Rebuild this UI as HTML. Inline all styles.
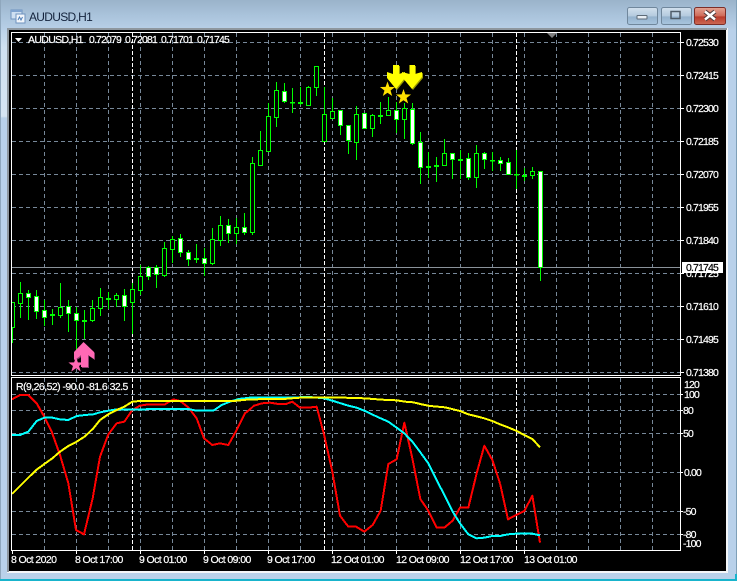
<!DOCTYPE html>
<html><head><meta charset="utf-8"><title>AUDUSD,H1</title>
<style>
html,body{margin:0;padding:0;width:737px;height:581px;overflow:hidden;background:#b9d1ea}
svg{display:block}
text{font-family:"Liberation Sans",sans-serif;font-size:10.5px;fill:#fff;stroke:#fff;stroke-width:.2px;letter-spacing:-.85px}
.d{letter-spacing:-.6px}
.c{shape-rendering:crispEdges}
.l polyline{shape-rendering:crispEdges}
</style></head><body>
<svg width="737" height="581" viewBox="0 0 737 581" xmlns="http://www.w3.org/2000/svg">
<defs>
<linearGradient id="top" x1="0" y1="0" x2="0" y2="1"><stop offset="0" stop-color="#9ab3ca"/><stop offset=".5" stop-color="#a9c3db"/><stop offset="1" stop-color="#b8d0e8"/></linearGradient>
<linearGradient id="glow" x1="0" y1="0" x2="0" y2="1"><stop offset="0" stop-color="#bcd3ea"/><stop offset=".2" stop-color="#cfe1f2"/><stop offset=".98" stop-color="#d6e5f3"/><stop offset="1" stop-color="#b9d1ea"/></linearGradient>
<linearGradient id="btn" x1="0" y1="0" x2="0" y2="1"><stop offset="0" stop-color="#d3e1ee"/><stop offset=".5" stop-color="#b4cade"/><stop offset=".55" stop-color="#95b2cd"/><stop offset="1" stop-color="#a9c6df"/></linearGradient>
<linearGradient id="red" x1="0" y1="0" x2="0" y2="1"><stop offset="0" stop-color="#e4a594"/><stop offset=".5" stop-color="#cf6a58"/><stop offset=".55" stop-color="#b93a2a"/><stop offset="1" stop-color="#cc6a55"/></linearGradient>
<clipPath id="mc"><rect x="12" y="33" width="668" height="342"/></clipPath>
</defs>

<!-- window frame -->
<rect width="737" height="581" fill="#b9d1ea"/>
<rect width="737" height="30" fill="url(#top)"/>
<rect x="1" y="30" width="6" height="88" fill="url(#glow)"/>
<rect x="0" y="0" width="1" height="581" fill="#8fa7bd"/>
<rect x="736" y="0" width="1" height="581" fill="#7fa0b8"/>
<rect x="0" y="579" width="737" height="2" fill="#19b4cc"/>
<rect x="735" y="574" width="2" height="7" fill="#19b4cc"/>
<rect x="7" y="28" width="721" height="545" fill="#f4f6f8"/>
<rect x="7" y="28" width="720" height="2" fill="#8e979f"/>
<rect x="7" y="28" width="2" height="544" fill="#8e979f"/>
<rect x="9" y="30" width="717" height="541" fill="#000"/>

<!-- title icon -->
<g class="c">
<rect x="11" y="10" width="11" height="9" fill="#cfe0f2" stroke="#6f93bf"/>
<rect x="11" y="10" width="11" height="2" fill="#7fa3cf"/>
<rect x="16" y="14" width="9" height="9" fill="#f2f6fb" stroke="#6f93bf"/>
</g>
<path d="M18 20l1.500-3 1.500 3 1.500-3" fill="none" stroke="#4f7fb8"/>
<text x="29" y="21" style="font-size:12px;letter-spacing:-.7px;fill:#14233c;stroke:none">AUDUSD,H1</text>

<!-- caption buttons -->
<rect x="627.500" y="7.500" width="30" height="17" rx="2" fill="url(#btn)" stroke="#70879c"/>
<rect x="637" y="15.500" width="10" height="3.500" rx=".5" fill="#e8eef4" stroke="#5d6b78"/>
<rect x="661.500" y="7.500" width="30" height="17" rx="2" fill="url(#btn)" stroke="#70879c"/>
<rect x="671" y="11.500" width="9" height="7" fill="none" stroke="#4f5c68" stroke-width="1.500"/>
<rect x="694.500" y="7.500" width="31" height="17" rx="2" fill="url(#red)" stroke="#7c2e28"/>
<path d="M705 11.500l10 8M715 11.500l-10 8" stroke="#4a3a3a" stroke-width="4.500"/>
<path d="M705 11.500l10 8M715 11.500l-10 8" stroke="#fff" stroke-width="2.500"/>

<!-- grid -->
<g class="c" fill="none" stroke-width="1">
<path stroke="#778899" stroke-dasharray="4 3" d="M12 42.500H680M12 75.500H680M12 108.500H680M12 141.500H680M12 174.500H680M12 207.500H680M12 240.500H680M12 273.500H680M12 306.500H680M12 339.500H680M12 372.500H680M12 394.500H680M12 410.500H680M12 433.500H680M12 472.500H680M12 511.500H680M12 534.500H680"/>
<path stroke="#778899" stroke-dasharray="4 3" d="M44.500 33V375M76.500 33V375M108.500 33V375M140.500 33V375M172.500 33V375M204.500 33V375M236.500 33V375M268.500 33V375M300.500 33V375M332.500 33V375M364.500 33V375M396.500 33V375M428.500 33V375M460.500 33V375M492.500 33V375M524.500 33V375M556.500 33V375M588.500 33V375M620.500 33V375M652.500 33V375"/>
<path stroke="#778899" stroke-dasharray="4 3" d="M44.500 378V550M76.500 378V550M108.500 378V550M140.500 378V550M172.500 378V550M204.500 378V550M236.500 378V550M268.500 378V550M300.500 378V550M332.500 378V550M364.500 378V550M396.500 378V550M428.500 378V550M460.500 378V550M492.500 378V550M524.500 378V550M556.500 378V550M588.500 378V550M620.500 378V550M652.500 378V550"/>
<path stroke="#fff" stroke-dasharray="4 2" d="M132.500 33V375M324.500 33V375M516.500 33V375M132.500 378V550M324.500 378V550M516.500 378V550"/>
<path stroke="#8a929a" d="M12 267.500H680"/>
</g>

<!-- candles -->
<g class="c" clip-path="url(#mc)" stroke="#00ff00" stroke-width="1">
<path fill="none" d="M12.500 327V343M20.500 282V318M28.500 290V320M36.500 290V319M44.500 300V326M52.500 309V325M60.500 283V318M68.500 300V332M76.500 307V350M84.500 310V339M92.500 300V322M100.500 288V316M108.500 292V309M116.500 293V307M124.500 289V321M132.500 283V334M140.500 265V295M148.500 266V280M156.500 265V288M164.500 242V277M172.500 236V263M180.500 234V257M188.500 250V266M196.500 244V263M204.500 248V276M212.500 228V265M220.500 216V246M228.500 219V243M236.500 218V244M244.500 213V235M252.500 157V235M260.500 131V165M268.500 103V151M276.500 82V127M284.500 83V103M292.500 88V113M300.500 87V105M308.500 86V105M316.500 66V96M324.500 87V141M332.500 98V119M340.500 110V135M348.500 125V154M356.500 106V160M364.500 113V128M372.500 114V137M380.500 102V124M388.500 97V116M396.500 102V133M404.500 103V139M412.500 103V145M420.500 132V184M428.500 152V178M436.500 157V182M444.500 139V165M452.500 153V179M460.500 150V179M468.500 153V180M476.500 145V188M484.500 152V169M492.500 152V171M500.500 157V171M508.500 158V174M516.500 150V189M524.500 168V181M532.500 167V179M540.500 171V281"/>
<path fill="#000" d="M10.500 302.500h4V327.500h-4zM18.500 293.500h4V303.500h-4zM58.500 307.500h4V315.500h-4zM90.500 308.500h4V320.500h-4zM98.500 297.500h4V308.500h-4zM114.500 295.500h4V299.500h-4zM130.500 289.500h4V302.500h-4zM138.500 276.500h4V290.500h-4zM162.500 248.500h4V275.500h-4zM170.500 239.500h4V249.500h-4zM210.500 239.500h4V263.500h-4zM218.500 225.500h4V240.500h-4zM234.500 227.500h4V233.500h-4zM250.500 163.500h4V232.500h-4zM258.500 150.500h4V165.500h-4zM266.500 116.500h4V151.500h-4zM274.500 90.500h4V117.500h-4zM306.500 87.500h4V105.500h-4zM314.500 66.500h4V87.500h-4zM322.500 114.500h4V141.500h-4zM330.500 111.500h4V118.500h-4zM354.500 114.500h4V142.500h-4zM370.500 115.500h4V128.500h-4zM386.500 110.500h4V115.500h-4zM402.500 108.500h4V119.500h-4zM442.500 153.500h4V165.500h-4zM474.500 153.500h4V177.500h-4zM530.500 171.500h4V175.500h-4z"/>
<path fill="#fff" d="M26.500 293.500h4V297.500h-4zM34.500 296.500h4V311.500h-4zM42.500 310.500h4V317.500h-4zM66.500 306.500h4V313.500h-4zM74.500 313.500h4V320.500h-4zM122.500 295.500h4V306.500h-4zM146.500 267.500h4V276.500h-4zM154.500 267.500h4V274.500h-4zM178.500 238.500h4V252.500h-4zM186.500 252.500h4V259.500h-4zM202.500 258.500h4V263.500h-4zM226.500 225.500h4V233.500h-4zM242.500 227.500h4V232.500h-4zM282.500 91.500h4V101.500h-4zM338.500 110.500h4V125.500h-4zM346.500 125.500h4V140.500h-4zM362.500 113.500h4V128.500h-4zM394.500 110.500h4V119.500h-4zM410.500 109.500h4V143.500h-4zM418.500 142.500h4V167.500h-4zM450.500 153.500h4V159.500h-4zM466.500 158.500h4V177.500h-4zM482.500 153.500h4V159.500h-4zM498.500 160.500h4V163.500h-4zM506.500 162.500h4V174.500h-4zM538.500 171.500h4V267.500h-4z"/>
<path fill="#00ff00" d="M50.500 314.500h4v1h-4zM82.500 320.500h4v1h-4zM106.500 298.500h4v1h-4zM194.500 258.500h4v1h-4zM290.500 102.500h4v.5h-4zM298.500 102.500h4v1h-4zM378.500 115.500h4v1h-4zM426.500 166.500h4v1h-4zM434.500 165.500h4v1h-4zM458.500 159.500h4v1h-4zM490.500 160.500h4v.5h-4zM514.500 174.500h4v.5h-4zM522.500 175.500h4v1h-4z"/>
</g>

<!-- arrow markers -->
<polygon transform="translate(1 1)" fill="#8a3a6a" points="83.500,342 94,352 94,359 88,355 88,367 81,367 81,355 79,357 74,360 74,352"/>
<polygon fill="#ff69b4" points="83.500,342 94,352 94,359 88,355 88,367 81,367 81,355 79,357 74,360 74,352"/>
<polygon transform="translate(76 365)" fill="#ff69b4" points="0,-8 1.880,-2.590 7.600,-2.470 3.040,.99 4.700,6.470 0,3.200 -4.700,6.470 -3.040,.99 -7.600,-2.470 -1.880,-2.590"/>
<g fill="#9a9a00" transform="translate(1 1)">
<polygon points="393,65 399,65 399,74 405,72 405,78 396,89 387,78 387,72 393,74"/>
<polygon points="409.500,65 415,65 415,74 422,72 422,77 412,89 402,77 402,72 409.500,74"/>
</g>
<polygon fill="#ffff00" points="393,65 399,65 399,74 405,72 405,78 396,89 387,78 387,72 393,74"/>
<polygon fill="#ffff00" points="409.500,65 415,65 415,74 422,72 422,77 412,89 402,77 402,72 409.500,74"/>
<polygon transform="translate(387.500 89.500)" fill="#ffe000" points="0,-8 1.880,-2.590 7.600,-2.470 3.040,.99 4.700,6.470 0,3.200 -4.700,6.470 -3.040,.99 -7.600,-2.470 -1.880,-2.590"/>
<polygon transform="translate(403.500 97)" fill="#ffe000" points="0,-8 1.880,-2.590 7.600,-2.470 3.040,.99 4.700,6.470 0,3.200 -4.700,6.470 -3.040,.99 -7.600,-2.470 -1.880,-2.590"/>
<polygon fill="#808080" points="547,33 557,33 552,38"/>

<!-- indicator lines -->
<g class="l" fill="none" stroke-width="6" stroke-linejoin="round">
<g transform="translate(0 375) scale(.33333)">
<polyline stroke="#ff0000" points="36,73 60,60 85,60 110,85 130,120 155,170 180,240 205,325 228,465 252,478 278,370 300,245 325,178 350,145 373,140 397,105 420,92 445,88 495,88 520,73 540,78 565,97 590,130 612,190 637,210 660,205 685,210 710,165 735,115 750,103"/>
<polyline stroke="#00ffff" points="36,180 60,180 85,170 110,138 133,128 157,128 180,133 205,135 230,123 255,120 280,118 300,112 325,107 350,103 420,103 495,102 565,102 590,107 640,107 665,90 690,80 715,72 750,68"/>
<polyline stroke="#ffff00" points="36,357 60,333 85,308 110,284 133,267 157,250 180,230 205,213 230,200 255,184 280,160 300,135 325,118 350,105 373,95 397,80 420,78 700,78 750,73"/>
</g>
<g transform="translate(250 375) scale(.33333)">
<polyline stroke="#ff0000" points="0,103 12,92 36,85 60,83 85,87 108,87 127,80 150,98 175,98 200,95 222,178 247,290 270,422 295,455 318,455 343,470 368,450 392,407 415,267 440,253 463,143 487,250 511,372 535,407 560,458 583,458 608,437 630,398 655,398 680,295 703,212 727,255 750,325"/>
<polyline stroke="#00ffff" points="0,68 36,68 100,68 180,66 222,70 250,78 295,92 320,98 345,108 370,120 392,130 415,140 440,158 463,175 487,200 511,232 535,265 560,315 583,360 608,410 630,445 655,478 680,490 703,488 727,483 750,483"/>
<polyline stroke="#ffff00" points="0,73 100,72 150,68 250,67 345,70 395,74 440,76 465,80 490,82 515,88 540,93 585,97 610,103 630,108 655,118 680,124 703,130 727,138 750,148"/>
</g>
<g transform="translate(490 375) scale(.33333)">
<polyline stroke="#ff0000" points="30,325 54,433 78,420 103,408 127,362 150,503"/>
<polyline stroke="#00ffff" points="30,483 54,478 78,476 127,476 150,481"/>
<polyline stroke="#ffff00" points="30,148 54,157 78,167 103,180 127,192 150,217"/>
</g>
</g>

<!-- frames -->
<g class="c" fill="none" stroke="#fff" stroke-width="1">
<path d="M11.500 32.500H680.500V375.500H11.500z"/>
<path d="M11.500 377.500H680.500V550.500H11.500z"/>
<path d="M681 42.500h3M681 75.500h3M681 108.500h3M681 141.500h3M681 174.500h3M681 207.500h3M681 240.500h3M681 273.500h3M681 306.500h3M681 339.500h3M681 372.500h3"/>
<path d="M681 394.500h2M681 410.500h2M681 433.500h2M681 472.500h2M681 511.500h2M681 534.500h2"/>
<path d="M12.500 551v3M76.500 551v3M140.500 551v3M204.500 551v3M268.500 551v3M332.500 551v3M396.500 551v3M460.500 551v3M524.500 551v3"/>
</g>

<!-- header -->
<polygon fill="#fff" points="15,38 22,38 18.500,42"/>
<text x="28" y="43" style="letter-spacing:-.65px">AUDUSD,H1</text>
<text x="89" y="43">0.72079</text>
<text x="125" y="43">0.72081</text>
<text x="161" y="43">0.71701</text>
<text x="197" y="43">0.71745</text>
<text x="16" y="390" style="letter-spacing:-.55px">R(9,26,52) -90.0 -81.6 32.5</text>

<!-- price axis -->
<text x="686" y="46">0.72530</text>
<text x="686" y="79">0.72415</text>
<text x="686" y="112">0.72300</text>
<text x="686" y="145">0.72185</text>
<text x="686" y="178">0.72070</text>
<text x="686" y="211">0.71955</text>
<text x="686" y="244">0.71840</text>
<text x="686" y="277">0.71725</text>
<text x="686" y="310">0.71610</text>
<text x="686" y="343">0.71495</text>
<text x="686" y="376">0.71380</text>
<rect x="682" y="262" width="41" height="11" fill="#fff" class="c"/>
<text x="686" y="271" style="fill:#000;stroke:#000">0.71745</text>

<!-- indicator axis -->
<text x="684" y="388">120</text>
<text x="684" y="398">100</text>
<text x="683" y="414">80</text>
<text x="683" y="437">50</text>
<text x="684" y="476">0.00</text>
<text x="683" y="515">-50</text>
<text x="683" y="538">-80</text>
<text x="683" y="547">-100</text>

<!-- time axis -->
<text class="d" x="11" y="563">8 Oct 2020</text>
<text class="d" x="75" y="563">8 Oct 17:00</text>
<text class="d" x="139" y="563">9 Oct 01:00</text>
<text class="d" x="203" y="563">9 Oct 09:00</text>
<text class="d" x="267" y="563">9 Oct 17:00</text>
<text class="d" x="331" y="563">12 Oct 01:00</text>
<text class="d" x="396" y="563">12 Oct 09:00</text>
<text class="d" x="460" y="563">12 Oct 17:00</text>
<text class="d" x="524" y="563">13 Oct 01:00</text>
</svg>
</body></html>
